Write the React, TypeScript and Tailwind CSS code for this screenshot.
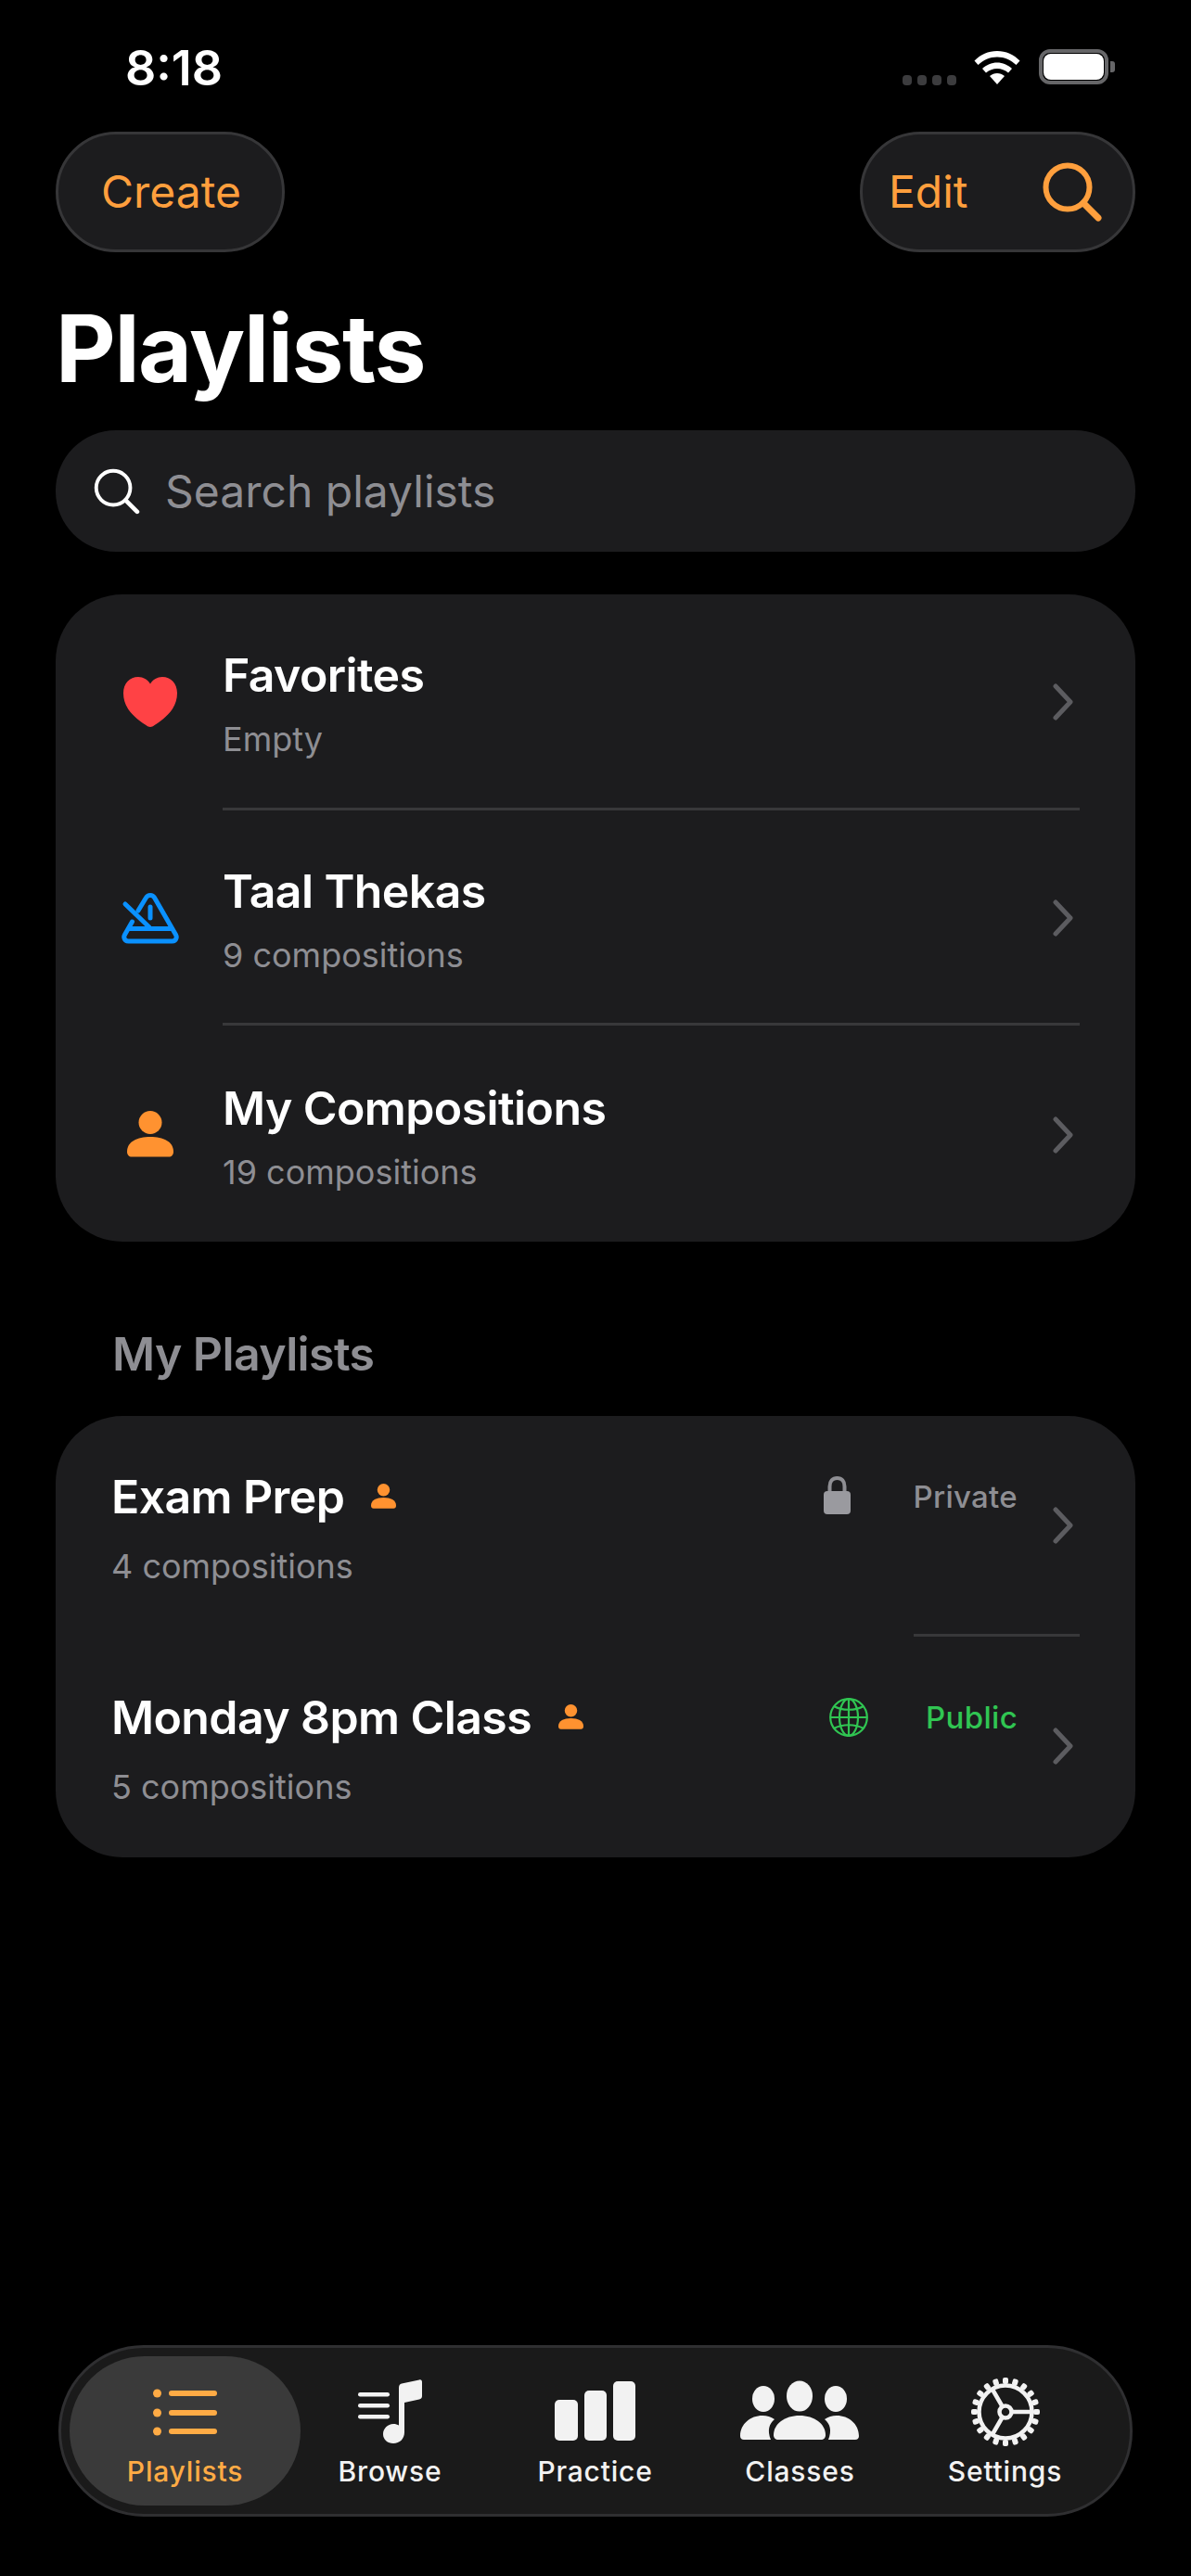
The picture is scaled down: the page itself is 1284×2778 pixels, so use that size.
import type { ReactNode } from 'react';

function Chevron() {
  return (
    <svg width="24" height="40" viewBox="0 0 24 40" fill="none" className="shrink-0">
      <path d="M4 3 L20 20 L4 37" stroke="#5c5c60" strokeWidth="5" strokeLinecap="round" strokeLinejoin="round" />
    </svg>
  );
}

function SearchIcon({ color, size, stroke }: { color: string; size: number; stroke: number }) {
  return (
    <svg width={size} height={size} viewBox="0 0 64 64" fill="none" className="shrink-0">
      <circle cx="27" cy="27" r="23.5" stroke={color} strokeWidth={stroke} />
      <path d="M44 44 L60 60" stroke={color} strokeWidth={stroke + 1} strokeLinecap="round" />
    </svg>
  );
}

function Person({ width, color = '#ff9230' }: { width: number; color?: string }) {
  return (
    <svg width={width} viewBox="0 0 50 50" className="shrink-0">
      <circle cx="25" cy="12.5" r="12.5" fill={color} />
      <path d="M0 44 C0 33 11 28 25 28 C39 28 50 33 50 44 C50 47.5 48 49.5 45 49.5 L5 49.5 C2 49.5 0 47.5 0 44Z" fill={color} />
    </svg>
  );
}

function Heart() {
  return (
    <svg width="58" height="54" viewBox="0 0 58 54">
      <path
        d="M29 54 C27.5 54 26 53 24 51.7 C11 43.5 0 33 0 17.5 C0 7 7 0 16 0 C21.5 0 26 2.8 29 7.5 C32 2.8 36.5 0 42 0 C51 0 58 7 58 17.5 C58 33 47 43.5 34 51.7 C32 53 30.5 54 29 54Z"
        fill="#ff4245"
      />
    </svg>
  );
}

function Metronome() {
  return (
    <svg width="62" height="56" viewBox="0 0 62 56" fill="none" stroke="#0a91ff" strokeWidth="5" strokeLinecap="round" strokeLinejoin="round">
      <path d="M18 20 L26.5 6 C28.5 2.5 33.5 2.5 35.5 6 L58.5 46 C60.5 49.5 58 53 54.5 53 L7.5 53 C4 53 1.5 49.5 3.5 46 L11.5 32" />
      <path d="M8.5 39.5 L53.5 39.5" />
      <path d="M4 13 L30 38" />
      <path d="M31 16 L31 28" />
    </svg>
  );
}

function Lock() {
  return (
    <svg width="29" height="41" viewBox="0 0 29 41" fill="none">
      <path d="M6.5 18 L6.5 11 C6.5 5.5 9.5 2 14.5 2 C19.5 2 22.5 5.5 22.5 11 L22.5 18" stroke="#8e8e93" strokeWidth="4" />
      <rect x="0" y="16" width="29" height="25" rx="4" fill="#9a9a9f" />
    </svg>
  );
}

function Globe() {
  return (
    <svg width="42" height="42" viewBox="0 0 42 42" fill="none" stroke="#30c552" strokeWidth="2.2">
      <circle cx="21" cy="21" r="19.8" />
      <ellipse cx="21" cy="21" rx="10" ry="19.8" />
      <path d="M21 1 L21 41 M1 21 L41 21" />
      <path d="M5 9 C14 14 28 14 37 9 M5 33 C14 28 28 28 37 33" />
    </svg>
  );
}

function TabPlaylists() {
  return (
    <svg width="70" height="70" viewBox="0 0 70 70" fill="#ffab45">
      <circle cx="4.5" cy="15" r="4.5" />
      <circle cx="4.5" cy="36" r="4.5" />
      <circle cx="4.5" cy="56" r="4.5" />
      <rect x="17" y="12" width="52" height="6" rx="3" />
      <rect x="17" y="33" width="52" height="6" rx="3" />
      <rect x="17" y="53" width="52" height="6" rx="3" />
    </svg>
  );
}

function TabBrowse() {
  return (
    <svg width="70" height="70" viewBox="0 0 70 70" fill="#f2f2f2">
      <rect x="0" y="14" width="34" height="4.5" rx="2.2" />
      <rect x="0" y="26" width="34" height="4.5" rx="2.2" />
      <rect x="0" y="38" width="34" height="4.5" rx="2.2" />
      <path d="M44 9 C44 6 45 5 47 4.4 L66 0.4 C68 0 69 1 69 3 L69 18 C69 20 68 21 66 21.4 L50 25 L50 57 C50 64 45 69 38 69 C32 69 27 65 27 59 C27 53 32 48 38 48 C40.5 48 42.5 48.6 44 49.5Z" />
    </svg>
  );
}

function TabPractice() {
  return (
    <svg width="88" height="70" viewBox="0 0 88 70" fill="#f2f2f2">
      <rect x="0" y="22" width="25" height="44" rx="5" />
      <rect x="32" y="12" width="24" height="54" rx="5" />
      <rect x="63" y="2" width="24" height="64" rx="5" />
    </svg>
  );
}

function TabClasses() {
  return (
    <svg width="130" height="70" viewBox="0 0 130 70" fill="#f2f2f2">
      <ellipse cx="25" cy="21" rx="12" ry="14" />
      <ellipse cx="64" cy="18" rx="14" ry="16.5" />
      <ellipse cx="103" cy="21" rx="12" ry="14" />
      <path d="M0 61 C0 48 11 39 24 39 C29 39 33 40.5 37 43 C31 48 29 55 33 65 L4 65 C1.5 65 0 63.5 0 61Z" />
      <path d="M128 61 C128 48 117 39 104 39 C99 39 95 40.5 91 43 C97 48 99 55 95 65 L124 65 C126.5 65 128 63.5 128 61Z" />
      <path d="M36 60 C36 48 48 39 64 39 C80 39 92 48 92 60 C92 63 90 65 87 65 L41 65 C38 65 36 63 36 60Z" />
    </svg>
  );
}

function TabSettings() {
  const teeth = Array.from({ length: 20 }, (_, i) => i * 18);
  return (
    <svg width="76" height="76" viewBox="0 0 76 76" fill="none" stroke="#f2f2f2">
      {teeth.map((deg) => (
        <rect key={deg} x="35" y="1" width="6" height="7" rx="2" fill="#f2f2f2" stroke="none" transform={`rotate(${deg} 38 38)`} />
      ))}
      <circle cx="38" cy="38" r="28.5" strokeWidth="4.5" />
      <circle cx="38" cy="38" r="6.5" strokeWidth="4.5" />
      <path d="M45 38 L66 38 M34.5 32 L23.5 13 M34.5 44 L23.5 63" strokeWidth="4.5" />
    </svg>
  );
}

interface CardRowProps {
  icon: ReactNode;
  title: string;
  sub: string;
  last?: boolean;
}

function CardRow({ icon, title, sub, last }: CardRowProps) {
  return (
    <div className="flex h-[232.67px]">
      <div className="flex w-[180px] shrink-0 items-center justify-center pl-[24px]">{icon}</div>
      <div className={`mr-[60px] flex flex-1 items-center justify-between pr-[6px] ${last ? '' : 'border-b-[3px] border-[#38383a]'}`}>
        <div className="pt-[6px]">
          <div className="text-[50px] leading-[60px] font-semibold tracking-[-0.6px] text-white">{title}</div>
          <div className="mt-[17px] text-[36px] leading-[44px] text-[#8e8e93]">{sub}</div>
        </div>
        <div className="mt-[3px]">
          <Chevron />
        </div>
      </div>
    </div>
  );
}

interface PlaylistRowProps {
  title: string;
  sub: string;
  statusIcon: ReactNode;
  status: string;
  statusClass: string;
  iconClass: string;
}

function PlaylistRow({ title, sub, statusIcon, status, statusClass, iconClass }: PlaylistRowProps) {
  return (
    <div className="flex items-start pl-[60px] pr-[66px]">
      <div className="min-w-0 flex-1">
        <div className="flex items-center gap-[29px]">
          <span className="text-[50px] leading-[60px] font-semibold tracking-[-0.6px] text-white">{title}</span>
          <Person width={27} />
        </div>
        <div className="mt-[23px] text-[36px] leading-[44px] text-[#8e8e93]">{sub}</div>
      </div>
      <div className={`flex items-center ${iconClass}`}>{statusIcon}</div>
      <div className={`w-[150px] text-right text-[33px] leading-[60px] font-medium tracking-[0.3px] ${statusClass}`}>{status}</div>
      <div className="mt-[41px] ml-[37px]">
        <Chevron />
      </div>
    </div>
  );
}

const tabs = [
  { label: 'Playlists', icon: <TabPlaylists />, active: true },
  { label: 'Browse', icon: <TabBrowse /> },
  { label: 'Practice', icon: <TabPractice /> },
  { label: 'Classes', icon: <TabClasses /> },
  { label: 'Settings', icon: <TabSettings /> },
];

export default function App() {
  return (
    <div className="flex h-[2778px] w-[1284px] flex-col overflow-hidden bg-black [font-family:Inter,sans-serif]">
      {/* status bar */}
      <div className="flex h-[142px] items-start justify-between pt-[44px] pr-[82px] pl-[135px]">
        <span className="text-[52px] leading-[60px] font-semibold text-white">8:18</span>
        <div className="flex items-start">
          <div className="mt-[37px] flex gap-[6px]">
            <span className="h-[11px] w-[10px] rounded-[4px] bg-[#3c3c3e]" />
            <span className="h-[11px] w-[10px] rounded-[4px] bg-[#3c3c3e]" />
            <span className="h-[11px] w-[10px] rounded-[4px] bg-[#3c3c3e]" />
            <span className="h-[11px] w-[10px] rounded-[4px] bg-[#3c3c3e]" />
          </div>
          <svg width="50" height="36" viewBox="0 0 50 36" fill="#fff" className="mt-[11px] ml-[19px]">
            <path d="M25 0 C34.5 0 43 4 49.5 10.5 L45.5 15 C40 9.8 33 6.5 25 6.5 C17 6.5 10 9.8 4.5 15 L0.5 10.5 C7 4 15.5 0 25 0Z" />
            <path d="M25 12.5 C31 12.5 36.5 15 41 19 L37 23.5 C33.5 20.5 29.5 19 25 19 C20.5 19 16.5 20.5 13 23.5 L9 19 C13.5 15 19 12.5 25 12.5Z" />
            <path d="M25 24 C28 24 30.5 25 33 27 L25 36 L17 27 C19.5 25 22 24 25 24Z" />
          </svg>
          <div className="mt-[9px] ml-[20px] flex items-center">
            <div className="h-[38px] w-[75px] rounded-[12px] border-[4px] border-[#666668] p-[1px]">
              <div className="h-full w-full rounded-[8px] bg-white" />
            </div>
            <div className="ml-[2px] h-[12px] w-[5px] rounded-r-[3px] bg-[#666668]" />
          </div>
        </div>
      </div>

      {/* top buttons */}
      <div className="flex justify-between px-[60px]">
        <div className="flex h-[130px] w-[247px] items-center justify-center rounded-[65px] border-[3px] border-[#363638] bg-[#1c1c1e] pl-[2px] text-[48px] text-[#ff9f3d]">
          Create
        </div>
        <div className="flex h-[130px] w-[297px] items-center justify-between rounded-[65px] border-[3px] border-[#363638] bg-[#1c1c1e] pr-[33px] pl-[28px] text-[48px] text-[#ff9f3d]">
          <span>Edit</span>
          <SearchIcon color="#ff9f3d" size={64} stroke={6} />
        </div>
      </div>

      <h1 className="mt-[44px] pl-[60px] text-[100px] leading-[120px] font-bold tracking-[-1.4px] text-white">Playlists</h1>

      <div className="mx-[60px] mt-[28px] flex h-[131px] items-center gap-[27px] rounded-[65px] bg-[#1c1c1e] pl-[41px]">
        <SearchIcon color="#ffffff" size={50} stroke={5} />
        <span className="text-[48px] leading-[60px] text-[#8e8e93]">Search playlists</span>
      </div>

      <div className="mx-[60px] mt-[46px] rounded-[72px] bg-[#1c1c1e]">
        <CardRow icon={<Heart />} title="Favorites" sub="Empty" />
        <CardRow icon={<Metronome />} title="Taal Thekas" sub="9 compositions" />
        <CardRow icon={<Person width={50} />} title="My Compositions" sub="19 compositions" last />
      </div>

      <div className="mt-[91px] pl-[121px] text-[50px] leading-[60px] font-semibold tracking-[-0.6px] text-[#8e8e93]">My Playlists</div>

      <div className="mx-[60px] mt-[37px] rounded-[72px] bg-[#1c1c1e] pt-[57px] pb-[54px]">
        <PlaylistRow
          title="Exam Prep"
          sub="4 compositions"
          statusIcon={<Lock />}
          status="Private"
          statusClass="text-[#8e8e93]"
          iconClass="pt-[8px] mr-[30px]"
        />
        <div className="mt-[51px] mb-[57px] ml-[925px] mr-[60px] h-[3px] bg-[#38383a]" />
        <PlaylistRow
          title="Monday 8pm Class"
          sub="5 compositions"
          statusIcon={<Globe />}
          status="Public"
          statusClass="text-[#30c552]"
          iconClass="pt-[9px] mr-[11px]"
        />
      </div>

      {/* tab bar */}
      <div className="mx-[63px] mt-auto mb-[64px] flex h-[185px] items-stretch rounded-[92px] border-[3px] border-[#2f2f31] bg-[#1a1a1a] px-[23px] py-[9px]">
        {tabs.map((t) => (
          <div
            key={t.label}
            className={
              t.active
                ? '-mx-[14px] flex w-[249px] shrink-0 flex-col items-center rounded-[81px] bg-[#3a3a3a] pt-[25px]'
                : 'flex w-[221px] shrink-0 flex-col items-center pt-[25px]'
            }
          >
            <div className="flex h-[70px] items-center justify-center">{t.icon}</div>
            <span className={`mt-[11px] text-[30px] leading-[36px] font-medium tracking-[0.8px] ${t.active ? 'text-[#ffab45]' : 'text-[#f2f2f2]'}`}>
              {t.label}
            </span>
          </div>
        ))}
      </div>
    </div>
  );
}
